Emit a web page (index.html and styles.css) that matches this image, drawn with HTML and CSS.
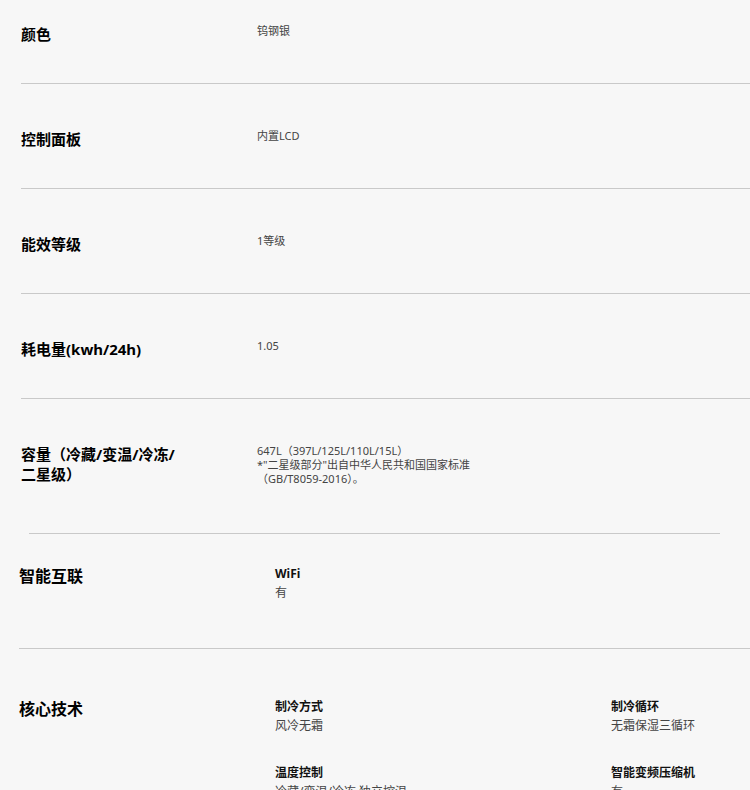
FILE: index.html
```html
<!DOCTYPE html>
<html lang="zh-CN">
<head>
  <meta charset="UTF-8">
  <meta name="viewport" content="width=device-width, initial-scale=1.0">
  <title>规格参数</title>
  <link rel="stylesheet" href="styles.css">
</head>
<body>
  <div class="spec-list">
    <div class="spec-row">
      <div class="spec-name">颜色</div>
      <div class="spec-value">钨钢银</div>
    </div>
    <div class="spec-row">
      <div class="spec-name">控制面板</div>
      <div class="spec-value">内置LCD</div>
    </div>
    <div class="spec-row">
      <div class="spec-name">能效等级</div>
      <div class="spec-value">1等级</div>
    </div>
    <div class="spec-row">
      <div class="spec-name">耗电量(kwh/24h)</div>
      <div class="spec-value">1.05</div>
    </div>
    <div class="spec-row last">
      <div class="spec-name">容量（冷藏/变温/冷冻/二星级）</div>
      <div class="spec-value">647L（397L/125L/110L/15L）<br>*"二星级部分"出自中华人民共和国国家标准（GB/T8059-2016）。</div>
    </div>
  </div>

  <div class="divider"></div>

  <div class="feature-row first">
    <div class="feature-name">智能互联</div>
    <div class="feature-specs">
      <div class="feature-item">
        <div class="item-title">WiFi</div>
        <div class="item-value">有</div>
      </div>
    </div>
  </div>

  <div class="feature-row">
    <div class="feature-name">核心技术</div>
    <div class="feature-specs">
      <div class="feature-item">
        <div class="item-title">制冷方式</div>
        <div class="item-value">风冷无霜</div>
      </div>
      <div class="feature-item">
        <div class="item-title">制冷循环</div>
        <div class="item-value">无霜保湿三循环</div>
      </div>
      <div class="feature-item">
        <div class="item-title">温度控制</div>
        <div class="item-value">冷藏/变温/冷冻 独立控温</div>
      </div>
      <div class="feature-item">
        <div class="item-title">智能变频压缩机</div>
        <div class="item-value">有</div>
      </div>
    </div>
  </div>
</body>
</html>
```

FILE: styles.css
```css
* { box-sizing: border-box; }
html, body {
  background: #f7f7f7;
}
body {
  margin: 0;
  font-family: 'Noto Sans', 'Noto Sans CJK SC', sans-serif;
  color: #000;
  overflow: hidden;
}
.spec-list {
  margin-left: 21px;
}
.spec-row {
  display: grid;
  grid-template-columns: 160px 220px;
  column-gap: 76px;
  align-items: start;
  padding: 45px 0 39px;
  border-bottom: 1px solid #c9c9c9;
}
.spec-row:first-child {
  padding-top: 24px;
}
.spec-row.last {
  border-bottom: none;
  padding-bottom: 47px;
}
.spec-name {
  font-size: 15px;
  font-weight: 700;
  line-height: 20px;
  color: #000;
}
.spec-value {
  font-size: 11px;
  line-height: 14px;
  color: #444;
}
.divider {
  margin: 0 30px 0 29px;
  border-top: 1px solid #c9c9c9;
}
.feature-row {
  display: grid;
  grid-template-columns: 256px 1fr;
  align-items: start;
  margin-left: 19px;
  padding: 48px 0 40px;
}
.feature-row.first {
  padding: 30px 0 46px;
  border-bottom: 1px solid #c9c9c9;
}
.feature-name {
  font-size: 16px;
  font-weight: 700;
  line-height: 26px;
  margin-top: -1px;
}
.feature-specs {
  display: grid;
  grid-template-columns: 336px 1fr;
  row-gap: 28px;
}
.item-title {
  font-size: 12px;
  font-weight: 700;
  line-height: 19px;
  color: #111;
}
.item-value {
  font-size: 12px;
  line-height: 19px;
  color: #444;
}
```
